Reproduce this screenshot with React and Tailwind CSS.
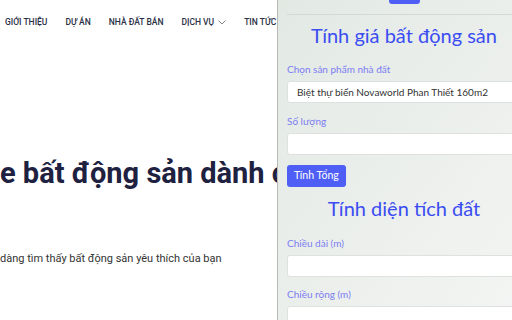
import React from 'react';

const navItems = ['GIỚI THIỆU', 'DỰ ÁN', 'NHÀ ĐẤT BÁN'];

function Field({ label, value, className }) {
  return (
    <div className={className}>
      <div className="text-[10px] leading-[14px] text-[#7c7df2]">{label}</div>
      <div className="mt-[5px] h-[22px] w-[234px] overflow-hidden whitespace-nowrap rounded-[3px] border border-[#dde2de] bg-white px-[9px] text-[10px] leading-[20px] text-[#333]">
        {value}
      </div>
    </div>
  );
}

export default function App() {
  return (
    <div className="flex h-[320px] w-[512px] overflow-hidden bg-white">
      <div className="w-[277px] shrink-0 overflow-hidden font-['Roboto',sans-serif]">
        <nav className="mt-[16px] flex items-center whitespace-nowrap pl-[5px] text-[8.5px] font-medium leading-[12px] text-[#2a2f45]">
          {navItems.map((item) => (
            <span key={item} className="mr-[18px]">{item}</span>
          ))}
          <span className="mr-[18px] flex items-center gap-[4px]">
            DỊCH VỤ
            <svg width="8" height="5" viewBox="0 0 8 5" fill="none" stroke="#666" strokeWidth="0.8">
              <path d="M0.5 0.5 L4 4 L7.5 0.5" />
            </svg>
          </span>
          <span>TIN TỨC</span>
        </nav>
        <h1 className="mt-[127px] whitespace-nowrap text-[29px] font-bold leading-[36px] text-[#1e2140]">
          e bất động sản dành cho bạn
        </h1>
        <p className="mt-[60px] whitespace-nowrap text-[11px] leading-[16px] text-[#333]">
          dàng tìm thấy bất động sản yêu thích của bạn
        </p>
      </div>
      <div className="w-[252px] shrink-0 border-l border-[#b8bab8] bg-linear-to-br from-[#e2e9e3] to-[#f4f5f4] pl-[9px] font-['Lato',sans-serif]">
        <div className="flex w-[234px] justify-center">
          <div className="h-[4px] w-[31px] rounded-b-[3px] bg-[#4f5ff6]" />
        </div>
        <div className="mt-[10px] border-t border-[#d4d9d5]" />
        <h2 className="mt-[6px] w-[234px] text-center text-[20px] leading-[28px] text-[#3b4df2]">
          Tính giá bất động sản
        </h2>
        <Field className="mt-[13px]" label="Chọn sản phẩm nhà đất" value="Biệt thự biển Novaworld Phan Thiết 160m2" />
        <Field className="mt-[11px]" label="Số lượng" value="" />
        <button className="mt-[10px] h-[22px] rounded-[3px] bg-[#4f5ff6] px-[7px] text-[10.5px] text-white">
          Tính Tổng
        </button>
        <h2 className="mt-[7px] w-[234px] text-center text-[20px] leading-[28px] text-[#3b4df2]">
          Tính diện tích đất
        </h2>
        <Field className="mt-[14px]" label="Chiều dài (m)" value="" />
        <Field className="mt-[10px]" label="Chiều rộng (m)" value="" />
      </div>
    </div>
  );
}
